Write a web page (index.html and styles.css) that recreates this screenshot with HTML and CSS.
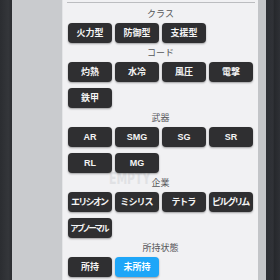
FILE: index.html
```html
<!DOCTYPE html>
<html lang="ja">
<head>
<meta charset="utf-8">
<link rel="stylesheet" href="styles.css">
</head>
<body>
<div class="screen">
  <div class="edge-left"></div>
  <div class="side-panel"></div>
  <div class="filter-panel">
    <div class="topline"></div>
    <div class="watermark">EMPTY</div>
    <div class="section">
      <div class="label">クラス</div>
      <div class="buttons">
        <div class="btn">火力型</div>
        <div class="btn">防御型</div>
        <div class="btn">支援型</div>
      </div>
    </div>
    <div class="section">
      <div class="label">コード</div>
      <div class="buttons">
        <div class="btn">灼熱</div>
        <div class="btn">水冷</div>
        <div class="btn">風圧</div>
        <div class="btn">電撃</div>
        <div class="btn">鉄甲</div>
      </div>
    </div>
    <div class="section">
      <div class="label">武器</div>
      <div class="buttons">
        <div class="btn">AR</div>
        <div class="btn">SMG</div>
        <div class="btn">SG</div>
        <div class="btn">SR</div>
        <div class="btn">RL</div>
        <div class="btn">MG</div>
      </div>
    </div>
    <div class="section">
      <div class="label">企業</div>
      <div class="buttons">
        <div class="btn tight">エリシオン</div>
        <div class="btn">ミシリス</div>
        <div class="btn">テトラ</div>
        <div class="btn tight">ピルグリム</div>
        <div class="btn tighter">アブノーマル</div>
      </div>
    </div>
    <div class="section">
      <div class="label">所持状態</div>
      <div class="buttons">
        <div class="btn">所持</div>
        <div class="btn active">未所持</div>
      </div>
    </div>
  </div>
  <div class="side-right"></div>
  <div class="edge-right"></div>
</div>
</body>
</html>
```

FILE: styles.css
```css
html, body {
  margin: 0;
  padding: 0;
}
body {
  width: 280px;
  height: 280px;
  overflow: hidden;
  font-family: "Liberation Sans", "Noto Sans CJK JP", sans-serif;
}
.screen {
  display: flex;
  width: 280px;
  height: 280px;
}
.edge-left {
  width: 12px;
  background: linear-gradient(90deg, #2b2d31 0%, #34363a 70%, #2a2c30 100%);
}
.side-panel {
  width: 50px;
  background: #c9cbce;
}
.filter-panel {
  position: relative;
  width: 196px;
  border-left: 1px solid #e4e5e7;
  background: #f1f1f3;
  padding: 0 5px;
  box-sizing: border-box;
}
.topline {
  height: 2px;
  margin: 0 -2px 1px -1px;
  border-bottom: 1px solid #bcbdc0;
}
.watermark {
  position: absolute;
  left: 46px;
  top: 170px;
  font-family: "DejaVu Sans Condensed", "Liberation Sans Narrow", sans-serif;
  font-weight: 700;
  font-size: 15px;
  color: #e0e1e4;
  transform: scaleX(0.8);
  transform-origin: left top;
}
.section {
  position: relative;
}
.label {
  height: 19px;
  line-height: 19px;
  text-align: center;
  font-size: 9px;
  color: #555659;
  font-family: "Noto Sans CJK JP", sans-serif;
}
.buttons {
  display: flex;
  flex-wrap: wrap;
  gap: 6px 3px;
}
.btn {
  width: 44px;
  height: 20px;
  box-sizing: border-box;
  background: #2f2f31;
  border-radius: 4px;
  box-shadow: 0 1px 2px rgba(0, 0, 0, 0.35);
  color: #f4f4f4;
  font-size: 9px;
  font-weight: 700;
  line-height: 20px;
  text-align: center;
  white-space: nowrap;
  font-feature-settings: "palt";
}
.btn.tight {
  letter-spacing: -1px;
  text-indent: -1px;
}
.btn.tighter {
  font-size: 8.5px;
  letter-spacing: -1.6px;
  text-indent: -1.6px;
}
.btn.active {
  background: #1ea6f8;
  color: #ffffff;
}
.side-right {
  width: 8px;
  background: #c3c5c8;
}
.edge-right {
  width: 14px;
  background: linear-gradient(90deg, #2c2e33 0%, #303237 50%, #26282c 60%, #2e3035 100%);
}
```
